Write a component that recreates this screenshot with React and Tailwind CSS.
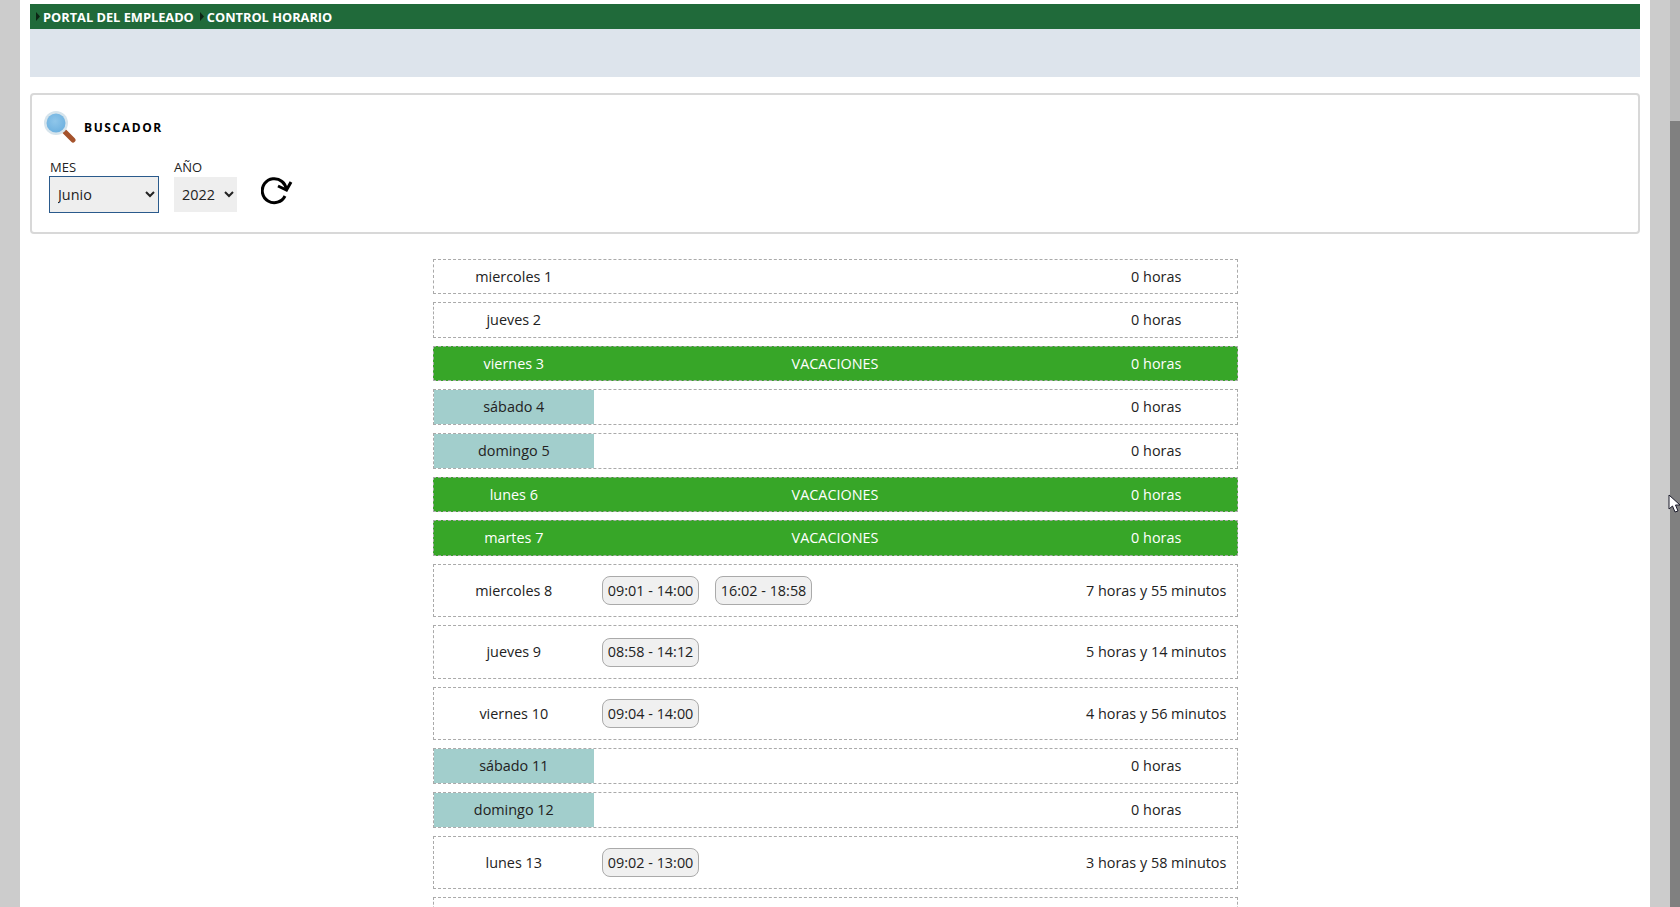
import React from "react";

const days = [
  { day: "miercoles 1", hours: "0 horas" },
  { day: "jueves 2", hours: "0 horas" },
  { day: "viernes 3", hours: "0 horas", type: "vacation" },
  { day: "sábado 4", hours: "0 horas", type: "weekend" },
  { day: "domingo 5", hours: "0 horas", type: "weekend" },
  { day: "lunes 6", hours: "0 horas", type: "vacation" },
  { day: "martes 7", hours: "0 horas", type: "vacation" },
  { day: "miercoles 8", hours: "7 horas y 55 minutos", times: ["09:01 - 14:00", "16:02 - 18:58"] },
  { day: "jueves 9", hours: "5 horas y 14 minutos", times: ["08:58 - 14:12"] },
  { day: "viernes 10", hours: "4 horas y 56 minutos", times: ["09:04 - 14:00"] },
  { day: "sábado 11", hours: "0 horas", type: "weekend" },
  { day: "domingo 12", hours: "0 horas", type: "weekend" },
  { day: "lunes 13", hours: "3 horas y 58 minutos", times: ["09:02 - 13:00"] },
  { day: "", hours: "" },
];

function Crumb({ children }) {
  return (
    <span className="flex items-center">
      <svg width="4" height="9" viewBox="0 0 4 9" className="mr-[3px] -mt-[2px]">
        <path d="M0 0L4 4.5L0 9Z" fill="#0c2414" />
      </svg>
      {children}
    </span>
  );
}

function Magnifier() {
  return (
    <svg width="34" height="34" viewBox="0 0 34 34">
      <defs>
        <radialGradient id="lens" cx="0.45" cy="0.4" r="0.6">
          <stop offset="0" stopColor="#8fc6ea" />
          <stop offset="1" stopColor="#6fb2e0" />
        </radialGradient>
      </defs>
      <path d="M22 21L31 30" stroke="#a5532c" strokeWidth="5" strokeLinecap="round" />
      <circle cx="14" cy="13" r="12" fill="#d6e4ec" />
      <circle cx="14" cy="13" r="9.5" fill="url(#lens)" />
    </svg>
  );
}

function Refresh() {
  return (
    <svg width="32" height="28" viewBox="0 0 32 28" fill="none" stroke="#000" strokeWidth="3">
      <path d="M24 19A12 12 0 1 1 21 4.5C23.5 6.5 25 9.5 25.5 13" />
      <path d="M17 9L25.5 13L30 5" />
    </svg>
  );
}

function Row({ day, hours, type, times }) {
  const vacation = type === "vacation";
  const weekend = type === "weekend";
  return (
    <div
      className={`flex items-stretch border border-dashed border-[#aaaaaa] ${
        times ? "h-[53.55px]" : "h-[35.6px]"
      } ${vacation ? "bg-[#37a628] text-white" : "text-[#222222]"}`}
    >
      <div className={`flex w-1/5 items-center justify-center ${weekend ? "bg-[#a2cecc]" : ""}`}>{day}</div>
      <div className={`flex flex-1 items-center gap-4 pl-2 ${vacation ? "justify-center pr-2" : ""}`}>
        {vacation && "VACACIONES"}
        {times &&
          times.map((t) => (
            <span
              key={t}
              className="flex h-[29px] w-[97px] items-center justify-center rounded-lg border border-[#aaaaaa] bg-[#f0f0f0]"
            >
              {t}
            </span>
          ))}
      </div>
      <div className="flex w-1/5 items-center justify-center">{hours}</div>
    </div>
  );
}

export default function App() {
  return (
    <div className="relative flex h-[907px] overflow-hidden bg-[#cccccc] font-['Open_Sans',sans-serif] text-[14.4px] text-[#222222]">
      <div className="w-5 shrink-0" />
      <main className="flex-1 overflow-hidden bg-white px-2.5 pt-1">
        <div className="flex h-[25px] items-center gap-[6px] bg-[#206a3a] pl-1.5 pt-[2px] text-[12.8px] font-bold text-white">
          <Crumb>PORTAL DEL EMPLEADO</Crumb>
          <Crumb>CONTROL HORARIO</Crumb>
        </div>
        <div className="h-12 bg-[#dde4ec]" />

        <section className="mt-4 h-[141px] rounded-[4px] border-2 border-[#d8d8d8] pl-2.5 pt-[15px]">
          <div className="flex items-center">
            <Magnifier />
            <span className="ml-[8px] mt-[2px] text-[12px] font-bold tracking-[1.6px] text-black">BUSCADOR</span>
          </div>
          <div className="mt-[17px] flex items-start">
            <label className="ml-[7px] flex flex-col text-[13px] leading-[13px]">
              <span className="ml-px">MES</span>
              <select
                defaultValue="Junio"
                className="mt-[2px] h-[37px] w-[110px] border border-[#2a5a8c] bg-[#eeeeee] pl-[4px] text-[14.4px] text-[#222222] outline-none"
              >
                <option>Junio</option>
              </select>
            </label>
            <label className="ml-[15px] flex flex-col text-[13px] leading-[13px]">
              <span>AÑO</span>
              <select
                defaultValue="2022"
                className="mt-[3px] h-[35px] w-[63px] bg-[#eeeeee] pl-[4px] text-[14.4px] text-[#222222] outline-none"
              >
                <option>2022</option>
              </select>
            </label>
            <div className="ml-[24px] mt-[16px]">
              <Refresh />
            </div>
          </div>
        </section>

        <div className="mx-auto mt-[24.6px] flex w-[805px] flex-col gap-2">
          {days.map((d, i) => (
            <Row key={i} {...d} />
          ))}
        </div>
      </main>
      <div className="w-5 shrink-0" />
      <div className="flex w-2.5 shrink-0 flex-col bg-[#bbbbbb]">
        <div className="mt-[121px] flex-1 bg-[#808080]" />
      </div>
      <svg width="13" height="20" viewBox="0 0 13 20" className="absolute left-[1668px] top-[494px]">
        <path d="M1 1L1 15L4.5 12L7 18L10 17L7.5 11L12 11Z" fill="#fff" stroke="#1a1a2a" strokeWidth="1" />
      </svg>
    </div>
  );
}
